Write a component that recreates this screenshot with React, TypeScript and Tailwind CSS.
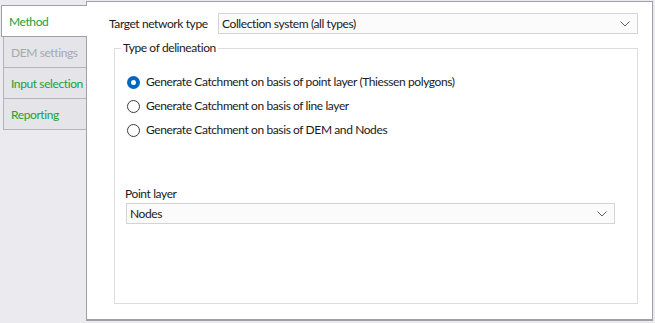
import React from "react";

const tabs = [
  { label: "DEM settings", disabled: true },
  { label: "Input selection", disabled: false },
  { label: "Reporting", disabled: false },
];

const options = [
  "Generate Catchment on basis of point layer (Thiessen polygons)",
  "Generate Catchment on basis of line layer",
  "Generate Catchment on basis of DEM and Nodes",
];

function Chevron() {
  return (
    <svg width="10" height="6" viewBox="0 0 10 6" className="shrink-0">
      <path d="M0.5 0.5 L5 5 L9.5 0.5" fill="none" stroke="#5f5f5f" strokeWidth="1" />
    </svg>
  );
}

function Select({ value, className }: { value: string; className: string }) {
  return (
    <div
      className={`flex h-[21px] items-center justify-between border border-[#d4d4d4] bg-[#fbfbfb] pl-[3px] pr-[7px] ${className}`}
    >
      <span className="text-[#1a1a1a]">{value}</span>
      <Chevron />
    </div>
  );
}

function Radio({ checked, label }: { checked: boolean; label: string }) {
  return (
    <div className="flex h-[24px] items-center">
      {checked ? (
        <span className="flex h-[13px] w-[13px] items-center justify-center rounded-full bg-[#0067c0]">
          <span className="h-[5px] w-[5px] rounded-full bg-white" />
        </span>
      ) : (
        <span className="h-[13px] w-[13px] rounded-full border border-[#3c3c3c] bg-white" />
      )}
      <span className="ml-[6px] text-[#1a1a1a]">{label}</span>
    </div>
  );
}

export default function App() {
  return (
    <div
      className="flex h-[323px] w-[655px] whitespace-nowrap bg-[#ebebef] pt-px text-[12px] leading-[16px] tracking-[-0.4px]"
      style={{ fontFamily: '"Segoe UI", Lato, sans-serif' }}
    >
      <div className="flex w-[87px] flex-col pl-px pt-[4px]">
        <div className="relative z-10 flex h-[32px] w-[86px] items-center border-y border-l border-[#a0a0a8] bg-white pl-[7px] pt-[1px] text-[#21a03a]">
          Method
        </div>
        <div className="flex flex-col pl-[2px]">
          {tabs.map((tab) => (
            <div
              key={tab.label}
              className={`flex h-[31px] items-center border-b border-l border-[#b4b4bb] bg-[#e4e4e9] pl-[7px] pt-[1px] ${
                tab.disabled ? "text-[#a8a8b0]" : "text-[#21a03a]"
              }`}
            >
              {tab.label}
            </div>
          ))}
        </div>
      </div>

      <div className="-ml-px flex h-[320px] w-[567px] flex-col border border-b-2 border-[#a0a0a8] bg-white pl-[22px] pr-[14px] pt-[11px]">
        <div className="flex items-center justify-between">
          <span className="text-[#1a1a1a]">Target network type</span>
          <Select value="Collection system (all types)" className="w-[420px]" />
        </div>

        <fieldset className="ml-[5px] mt-[6px] h-[264px] border border-[#dcdcdc] px-[6px]">
          <legend className="px-[2px] text-[#1a1a1a]">Type of delineation</legend>
          <div className="flex flex-col pl-[6px] pt-[14px]">
            {options.map((label, i) => (
              <Radio key={label} checked={i === 0} label={label} />
            ))}
          </div>
          <div className="mt-[44px] pl-[4px] text-[#1a1a1a]">Point layer</div>
          <Select value="Nodes" className="ml-[5px] mt-[1px] w-[489px]" />
        </fieldset>
      </div>
    </div>
  );
}
